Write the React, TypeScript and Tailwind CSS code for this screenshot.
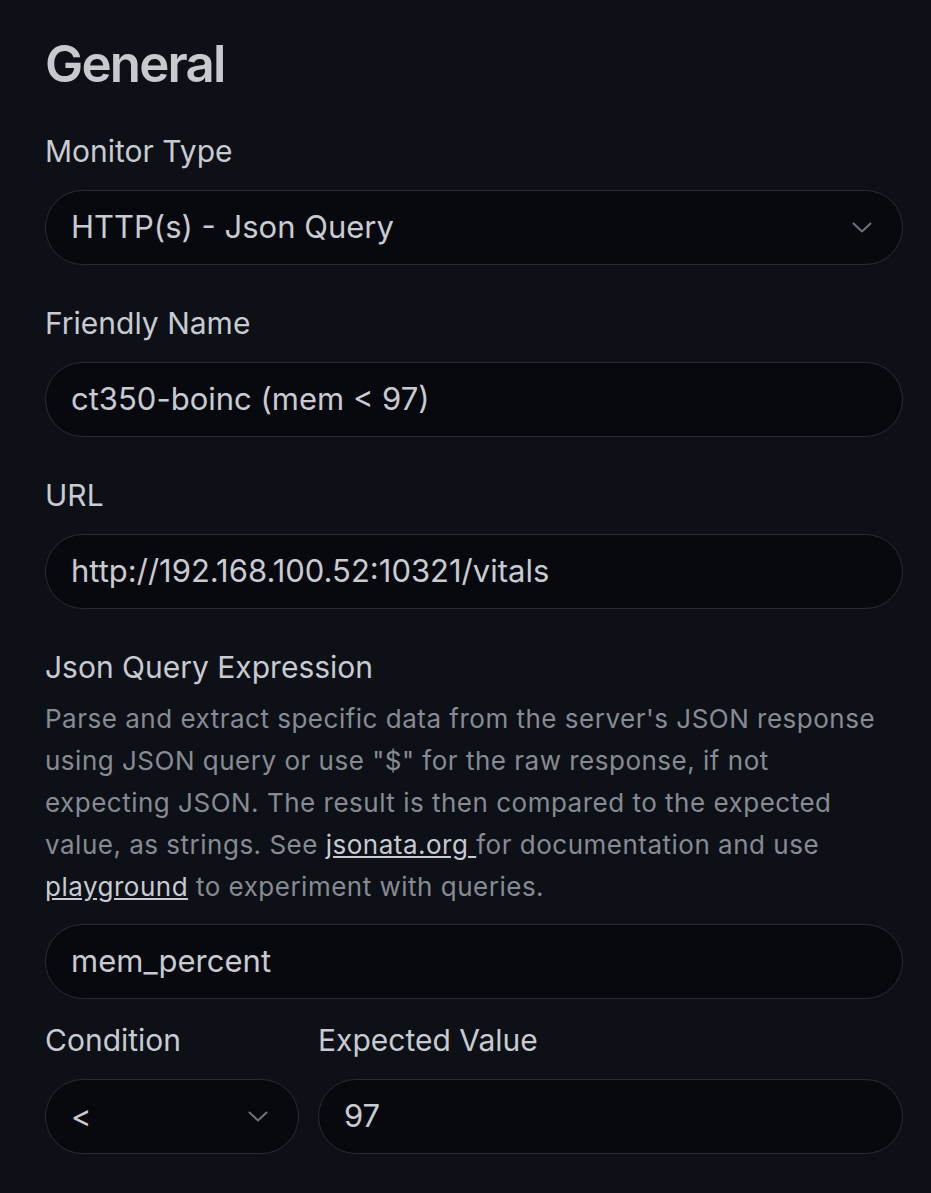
import React from "react";

function Chevron() {
  return (
    <svg width="20" height="11" viewBox="0 0 20 11" fill="none" className="shrink-0">
      <path d="M1.5 1.5 L10 9.5 L18.5 1.5" stroke="#6e727b" strokeWidth="2" strokeLinecap="round" strokeLinejoin="round" />
    </svg>
  );
}

function Label({ children, className = "" }: { children: React.ReactNode; className?: string }) {
  return (
    <div className={"text-[30px] leading-[36px] text-[#c8cbd1] " + className}>{children}</div>
  );
}

function Box({ children, select = false, className = "" }: { children: React.ReactNode; select?: boolean; className?: string }) {
  return (
    <div
      className={
        "h-[75px] rounded-full border border-[#2a2d37] bg-[#07090e] pl-[25px] pr-[30px] flex items-center justify-between text-[31px] text-[#c8cbd1] " +
        className
      }
    >
      <span>{children}</span>
      {select && <Chevron />}
    </div>
  );
}

export default function App() {
  return (
    <div className="min-h-screen bg-[#0d1016] pl-[45px] pr-[28px] pt-[34px] font-['Inter','Noto_Sans',sans-serif]">
      <h2 className="text-[51px] leading-[60px] font-semibold tracking-[-0.035em] text-[#c6c9ce]">General</h2>

      <Label className="mt-[39px]">Monitor Type</Label>
      <Box select className="mt-[21px]">HTTP(s) - Json Query</Box>

      <Label className="mt-[40px]">Friendly Name</Label>
      <Box className="mt-[21px]">ct350-boinc (mem &lt; 97)</Box>

      <Label className="mt-[40px]">URL</Label>
      <Box className="mt-[21px]">http://192.168.100.52:10321/vitals</Box>

      <Label className="mt-[40px]">Json Query Expression</Label>
      <p className="mt-[13px] text-[26px] leading-[42px] tracking-[0.5px] text-[#868b94] whitespace-nowrap">
        Parse and extract specific data from the server's JSON response
        <br />
        using JSON query or use "$" for the raw response, if not
        <br />
        expecting JSON. The result is then compared to the expected
        <br />
        value, as strings. See <a className="underline text-[#c8cbd1]">jsonata.org </a>for documentation and use
        <br />
        <a className="underline text-[#c8cbd1]">playground</a> to experiment with queries.
      </p>
      <Box className="mt-[16px]">mem_percent</Box>

      <div className="mt-[23px] flex gap-[19px]">
        <div className="w-[254px] shrink-0">
          <Label>Condition</Label>
          <Box select className="mt-[21px]">&lt;</Box>
        </div>
        <div className="flex-1">
          <Label>Expected Value</Label>
          <Box className="mt-[21px]">97</Box>
        </div>
      </div>
    </div>
  );
}
